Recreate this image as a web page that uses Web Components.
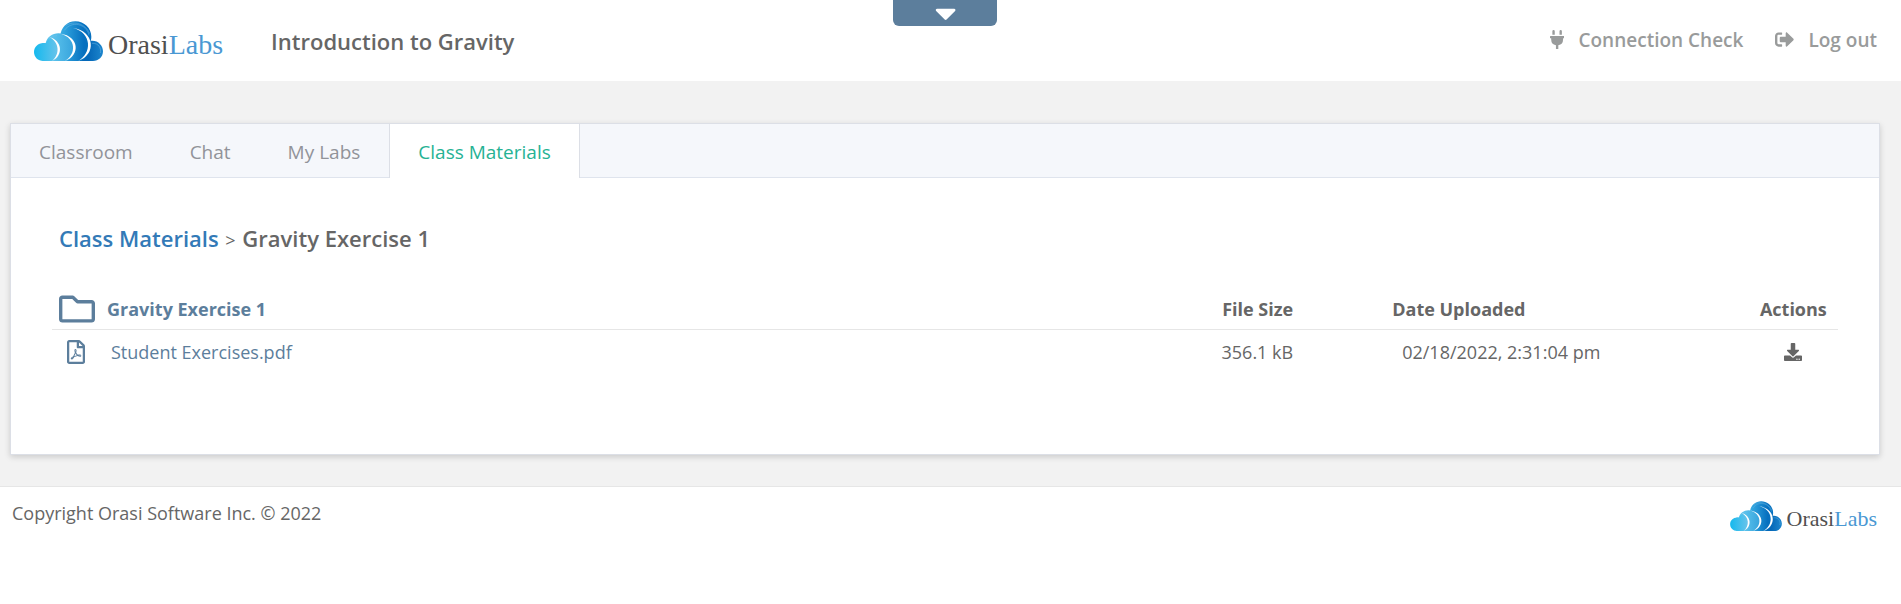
<!DOCTYPE html>
<html lang="en">
<head>
<meta charset="utf-8">
<meta name="viewport" content="width=device-width, initial-scale=1">
<title>Introduction to Gravity - OrasiLabs</title>
<style>
    body {
        margin: 0;
        background: #fff;
        color: #666;
        font-family: "Open Sans", sans-serif;
        font-size: 18px;
        line-height: 24px;
    }
</style>
</head>
<body>
<lab-page>
    <lab-header slot="header" heading="Introduction to Gravity">
        <lab-nav-link icon="plug" href="#connection">Connection Check</lab-nav-link>
        <lab-nav-link icon="logout" href="#logout">Log out</lab-nav-link>
    </lab-header>
    <lab-panel>
        <lab-tab slot="tabs" href="#classroom">Classroom</lab-tab>
        <lab-tab slot="tabs" href="#chat">Chat</lab-tab>
        <lab-tab slot="tabs" href="#labs">My Labs</lab-tab>
        <lab-tab slot="tabs" href="#materials" active>Class Materials</lab-tab>
        <lab-breadcrumb parent="Class Materials">Gravity Exercise 1</lab-breadcrumb>
        <lab-files folder="Gravity Exercise 1"></lab-files>
    </lab-panel>
    <lab-footer slot="footer">Copyright Orasi Software Inc. © 2022</lab-footer>
</lab-page>

<script>
const ICONS = {
    plug: ['384 512', 'M320 32a32 32 0 0 0-64 0v96h64zm48 128H16a16 16 0 0 0-16 16v32a16 16 0 0 0 16 16h16v32a160.07 160.07 0 0 0 128 156.8V512h64v-99.2A160.07 160.07 0 0 0 352 256v-32h16a16 16 0 0 0 16-16v-32a16 16 0 0 0-16-16zM128 32a32 32 0 0 0-64 0v96h64z'],
    logout: ['512 512', 'M497 273L329 441c-15 15-41 4.500-41-17v-96H152c-13.300 0-24-10.700-24-24v-96c0-13.300 10.700-24 24-24h136V88c0-21.400 25.900-32 41-17l168 168c9.300 9.400 9.300 24.600 0 34zM192 436v-40c0-6.600-5.400-12-12-12H96c-17.700 0-32-14.300-32-32V160c0-17.700 14.300-32 32-32h84c6.600 0 12-5.400 12-12V76c0-6.600-5.400-12-12-12H96c-53 0-96 43-96 96v192c0 53 43 96 96 96h84c6.600 0 12-5.400 12-12z'],
    caret: ['320 512', 'M31.300 192h257.300c17.800 0 26.700 21.500 14.100 34.100L174.100 354.800c-7.800 7.800-20.500 7.800-28.300 0L17.200 226.100C4.600 213.500 13.500 192 31.300 192z'],
    folder: ['512 512', 'M464 128H272l-54.630-54.630c-6-6-14.140-9.370-22.630-9.370H48C21.490 64 0 85.490 0 112v288c0 26.510 21.490 48 48 48h416c26.510 0 48-21.490 48-48V176c0-26.510-21.490-48-48-48zm0 272H48V112h140.120l54.630 54.630c6 6 14.140 9.370 22.630 9.370H464v224z'],
    pdf: ['384 512', 'M369.900 97.900L286 14C277 5 264.800-.1 252.100-.1H48C21.500 0 0 21.500 0 48v416c0 26.500 21.500 48 48 48h288c26.500 0 48-21.500 48-48V131.900c0-12.700-5.100-25-14.100-34zM332.100 128H256V51.900l76.100 76.100zM48 464V48h160v104c0 13.300 10.700 24 24 24h104v288H48zm250.200-143.700c-12.200-12-47-8.700-64.400-6.500-17.200-10.500-28.700-25-36.800-46.300 3.900-16.100 10.100-40.600 5.400-56-4.200-26.200-37.800-23.600-42.600-5.900-4.400 16.100-.4 38.500 7 67.100-10 23.900-24.900 56-35.400 74.400-20 10.300-47 26.200-51 46.200-3.300 15.800 26 55.200 76.100-31.200 22.400-7.400 46.800-16.500 68.400-20.100 18.900 10.200 41 17 55.800 17 25.500 0 28-28.200 17.500-38.700zm-198.100 77.800c5.100-13.700 24.500-29.500 30.400-35-19 30.300-30.400 35.700-30.400 35zm81.600-190.600c7.400 0 6.700 32.100 1.800 40.800-4.400-13.900-4.300-40.800-1.800-40.800zm-24.400 136.600c9.700-16.900 18-37 24.700-54.700 8.300 15.100 18.900 27.200 30.100 35.500-20.800 4.300-38.900 13.100-54.800 19.200zm131.600-5s-5 6-37.300-7.800c35.100-2.600 40.900 5.400 37.300 7.800z'],
    download: ['512 512', 'M216 0h80c13.300 0 24 10.700 24 24v168h87.700c17.800 0 26.700 21.500 14.100 34.100L269.700 378.300c-7.500 7.500-19.800 7.500-27.300 0L90.100 226.100c-12.600-12.600-3.700-34.100 14.100-34.100H192V24c0-13.300 10.700-24 24-24zm296 376v112c0 13.300-10.700 24-24 24H24c-13.300 0-24-10.700-24-24V376c0-13.300 10.700-24 24-24h146.700l49 49c20.100 20.100 52.500 20.100 72.600 0l49-49H488c13.300 0 24 10.700 24 24zm-124 88c0-11-9-20-20-20s-20 9-20 20 9 20 20 20 20-9 20-20zm64 0c0-11-9-20-20-20s-20 9-20 20 9 20 20 20 20-9 20-20z']
};

class LabElement extends HTMLElement {
    constructor() {
        super();
        this.attachShadow({ mode: 'open' });
    }

    connectedCallback() {
        this.shadowRoot.innerHTML = this.render();
    }
}

class LabIcon extends LabElement {
    render() {
        const [box, path] = ICONS[this.getAttribute('name')];
        return `
            <style>
                :host { display: inline-flex; }
                svg { height: var(--icon-size, 18px); fill: currentColor; }
            </style>
            <svg viewBox="0 0 ${box}" aria-hidden="true"><path d="${path}"/></svg>
        `;
    }
}

class LabLogo extends LabElement {
    render() {
        return `
            <style>
                :host {
                    display: flex;
                    align-items: flex-end;
                    gap: 5px;
                    font-family: "Liberation Serif", serif;
                    font-size: 28px;
                    line-height: 32px;
                    color: #505050;
                }
                svg { width: 69px; height: 40px; }
                b { font-weight: normal; color: #4a98d3; }
                :host([small]) { font-size: 22px; line-height: 24px; }
                :host([small]) svg { width: 52px; height: 30px; }
            </style>
            <svg viewBox="0 0 207 120" aria-hidden="true">
                <defs>
                    <linearGradient id="light" x2="1"><stop stop-color="#14b9ee"/><stop offset="1" stop-color="#6fc4ea"/></linearGradient>
                    <linearGradient id="mid" x2="1"><stop offset=".3" stop-color="#5cc3ec"/><stop offset="1" stop-color="#35a2dc"/></linearGradient>
                    <linearGradient id="deep" x2="1"><stop offset=".2" stop-color="#35aae2"/><stop offset=".8" stop-color="#0670bf"/></linearGradient>
                    <linearGradient id="dark" x2="1"><stop offset=".5" stop-color="#0568b8"/><stop offset="1" stop-color="#1d86cd"/></linearGradient>
                </defs>
                <path fill="url(#dark)" d="M120 120V60h48c22-4 39 12 39 31 0 17-13 29-30 29z"/>
                <path fill="url(#deep)" d="M60 120V46h19C80 20 99 1 124 1c27 0 48 21 48 46 0 8-2 14-4 19 5 27-8 45-26 54z"/>
                <path fill="url(#mid)" d="M25 120V66h10c4-17 20-29 38-29 6 0 12 1 17 3 21 8 32 23 32 43 0 16-9 30-24 37z"/>
                <path fill="url(#light)" d="M28 120C12 120 0 108 0 93s12-27 28-27c3 0 6 0 8 1 3-10 10-15 18-17 16 6 23 19 23 36 0 14-6 27-17 34z"/>
                <!-- Crescents between the lobes -->
                <g fill="#fff">
                    <path d="M46 48c38 10 44 55 8 72 25-21 22-56-8-72z"/>
                    <path d="M80 38c55 7 61 65 12 82 36-20 35-69-12-82z"/>
                    <path d="M117 21c65 9 72 80 15 99 43-23 42-85-15-99z"/>
                </g>
                <path fill="none" stroke="#76bfe7" stroke-width="2" opacity=".7" d="M91 28c22-31 67-19 74 15M174 67c20-2 29 16 25 29M45 55c6-7 14-11 24-11M95 14c25-17 61-5 72 24"/>
            </svg>
            <span>Orasi<b>Labs</b></span>
        `;
    }
}

class LabPage extends LabElement {
    render() {
        return `
            <style>
                :host { display: block; }
                main { background: #f2f2f2; padding: 42px 21px 31px 10px; }
            </style>
            <slot name="header"></slot>
            <main><slot></slot></main>
            <slot name="footer"></slot>
        `;
    }
}

class LabHeader extends LabElement {
    render() {
        return `
            <style>
                :host {
                    display: block;
                    position: relative;
                    background: #fff;
                }
                header {
                    display: flex;
                    align-items: center;
                    height: 81px;
                    box-sizing: border-box;
                    padding: 0 24px 0 34px;
                }
                h1 {
                    flex: 1;
                    margin: 0 0 0 48px;
                    font-size: 22px;
                    font-weight: 600;
                    line-height: 30px;
                }
                nav { display: flex; gap: 32px; padding-bottom: 2px; }
                /* Pull-down handle, lies over the top edge */
                .handle {
                    position: absolute;
                    top: 0;
                    left: 47%;
                    display: flex;
                    justify-content: center;
                    align-items: center;
                    width: 104px;
                    height: 26px;
                    padding: 0;
                    border: none;
                    border-radius: 0 0 6px 6px;
                    background: #5c7e9c;
                    color: #fff;
                    --icon-size: 34px;
                    cursor: pointer;
                    overflow: hidden;
                }
            </style>
            <header>
                <lab-logo></lab-logo>
                <h1>${this.getAttribute('heading')}</h1>
                <nav><slot></slot></nav>
            </header>
            <button class="handle" type="button" aria-label="Open menu"><lab-icon name="caret"></lab-icon></button>
        `;
    }
}

class LabNavLink extends LabElement {
    render() {
        return `
            <style>
                :host { display: block; }
                a {
                    display: flex;
                    align-items: center;
                    gap: 14px;
                    color: #999b9b;
                    font-size: 19px;
                    font-weight: 600;
                    text-decoration: none;
                    --icon-size: 19px;
                }
            </style>
            <a href="${this.getAttribute('href')}"><lab-icon name="${this.getAttribute('icon')}"></lab-icon><slot></slot></a>
        `;
    }
}

class LabPanel extends LabElement {
    render() {
        return `
            <style>
                :host {
                    display: block;
                    background: #fff;
                    border: 1px solid #dcdfe6;
                    box-shadow: 0 2px 6px rgba(0, 0, 0, .16);
                }
                nav {
                    display: flex;
                    gap: 1px;
                    background: #f5f7fb;
                    box-shadow: inset 0 -1px #dfe4ed;
                }
                section { padding: 44px 41px 80px; }
            </style>
            <nav><slot name="tabs"></slot></nav>
            <section><slot></slot></section>
        `;
    }
}

class LabTab extends LabElement {
    render() {
        return `
            <style>
                :host { display: block; }
                a {
                    display: block;
                    padding: 2px 28px 0;
                    border: 0 solid #dcdfe6;
                    color: #919399;
                    font-size: 19px;
                    line-height: 52px;
                    text-decoration: none;
                }
                :host([active]) a {
                    border-width: 0 1px;
                    background: #fff;
                    color: #26b294;
                }
            </style>
            <a href="${this.getAttribute('href')}"><slot></slot></a>
        `;
    }
}

class LabBreadcrumb extends LabElement {
    render() {
        return `
            <style>
                :host { display: block; padding: 0 7px; }
                h2 {
                    margin: 0;
                    font-size: 22px;
                    font-weight: 600;
                    line-height: 32px;
                }
                a { color: #337ab7; text-decoration: none; }
                span { margin: 0 1px; font-size: 18px; font-weight: 400; }
            </style>
            <h2><a href="#materials">${this.getAttribute('parent')}</a> <span>&gt;</span> <slot></slot></h2>
        `;
    }
}

class LabFiles extends LabElement {
    render() {
        return `
            <style>
                :host { display: block; margin-top: 32px; }
                table {
                    width: 100%;
                    table-layout: fixed;
                    border-collapse: collapse;
                }
                th, td { padding: 0; height: 44px; text-align: left; }
                th { height: 41px; border-bottom: 1px solid #e6e6e6; font-weight: 700; }
                .name { width: 60%; }
                .size { width: 10%; padding-right: 9px; text-align: right; box-sizing: border-box; }
                .date { width: 25%; padding-left: 90px; box-sizing: border-box; }
                td.date { padding-left: 100px; }
                .actions { width: 5%; text-align: center; }
                .file, .folder { display: flex; align-items: center; color: #5c7e9c; text-decoration: none; }
                .folder { gap: 12px; padding-left: 7px; --icon-size: 36px; }
                .file { gap: 26px; padding-left: 15px; --icon-size: 24px; }
                button {
                    display: flex;
                    margin: 0 auto;
                    padding: 0;
                    border: none;
                    background: none;
                    color: #666;
                    cursor: pointer;
                    --icon-size: 18px;
                }
            </style>
            <table>
                <thead>
                    <tr>
                        <th class="name"><span class="folder"><lab-icon name="folder"></lab-icon>${this.getAttribute('folder')}</span></th>
                        <th class="size">File Size</th>
                        <th class="date">Date Uploaded</th>
                        <th class="actions">Actions</th>
                    </tr>
                </thead>
                <tbody>
                    <tr>
                        <td class="name"><a class="file" href="#pdf"><lab-icon name="pdf"></lab-icon>Student Exercises.pdf</a></td>
                        <td class="size">356.1 kB</td>
                        <td class="date">02/18/2022, 2:31:04 pm</td>
                        <td class="actions"><button type="button" aria-label="Download"><lab-icon name="download"></lab-icon></button></td>
                    </tr>
                </tbody>
            </table>
        `;
    }
}

class LabFooter extends LabElement {
    render() {
        return `
            <style>
                :host { display: block; }
                footer {
                    display: flex;
                    justify-content: space-between;
                    padding: 14px 24px 14px 12px;
                    border-top: 1px solid #e6e6e6;
                }
            </style>
            <footer><span><slot></slot></span><lab-logo small></lab-logo></footer>
        `;
    }
}

customElements.define('lab-icon', LabIcon);
customElements.define('lab-logo', LabLogo);
customElements.define('lab-page', LabPage);
customElements.define('lab-header', LabHeader);
customElements.define('lab-nav-link', LabNavLink);
customElements.define('lab-panel', LabPanel);
customElements.define('lab-tab', LabTab);
customElements.define('lab-breadcrumb', LabBreadcrumb);
customElements.define('lab-files', LabFiles);
customElements.define('lab-footer', LabFooter);
</script>
</body>
</html>
